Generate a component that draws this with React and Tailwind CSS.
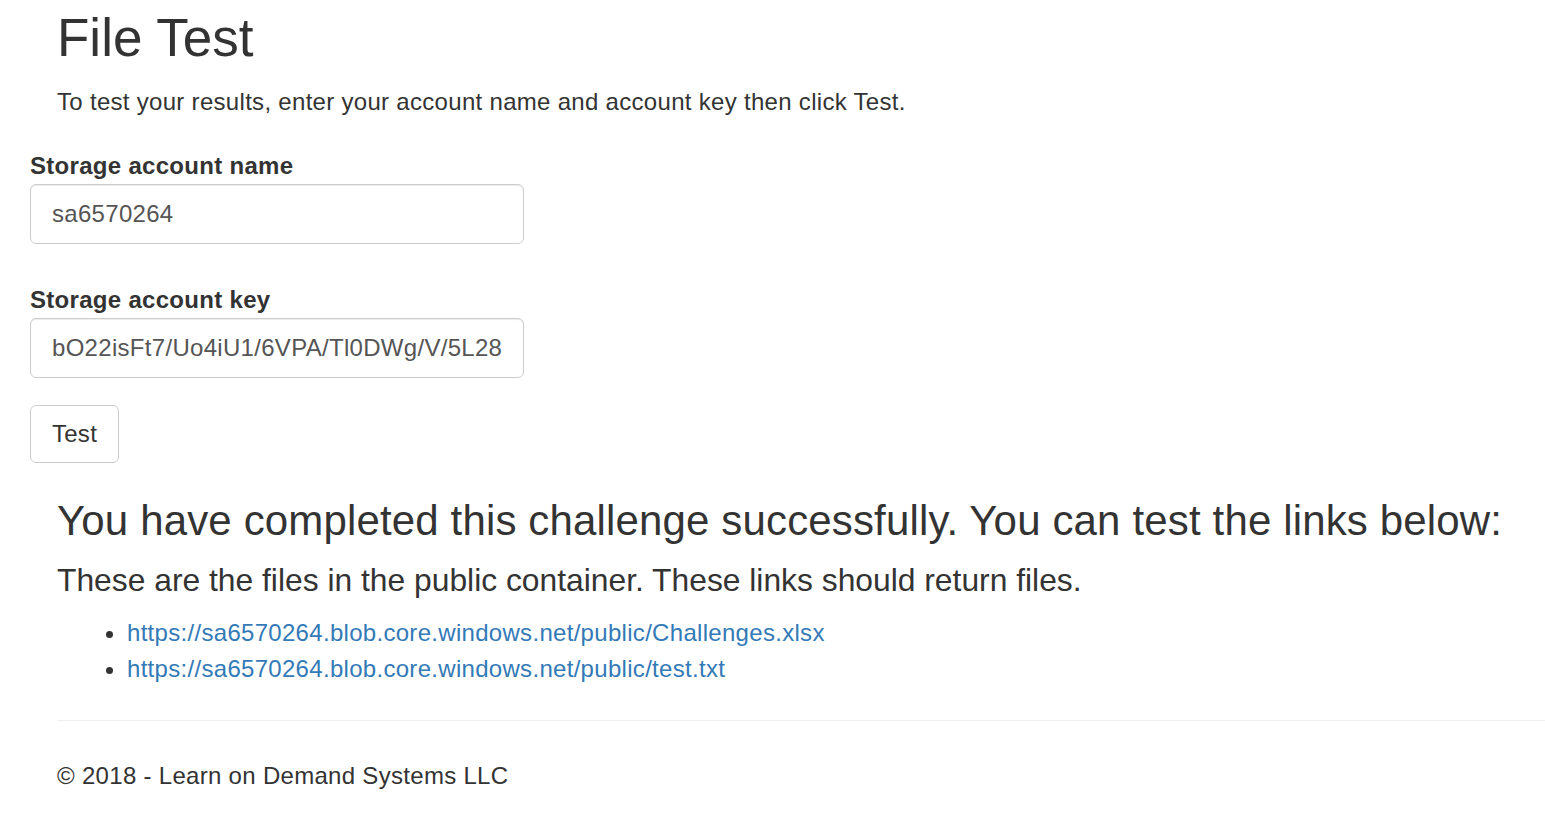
export default function App() {
  return (
    <div className="min-h-[834px] bg-white text-[#333] text-[24px] leading-[34px] tracking-[0.3px]" style={{ fontFamily: '"Liberation Sans", Arial, sans-serif' }}>
      <div className="pl-[57px] pt-[8px]">
        <h1 className="text-[53px] leading-[60px] font-normal tracking-normal">File Test</h1>
        <p className="mt-[17px]">To test your results, enter your account name and account key then click Test.</p>
      </div>
      <form className="pl-[30px] mt-[30px]" onSubmit={(e) => e.preventDefault()}>
        <div className="flex flex-col">
          <label className="font-bold leading-[34px]">Storage account name</label>
          <div className="mt-[1px] w-[494px] h-[60px] border border-[#ccc] rounded-[6px] px-[21px] flex items-center text-[#555] shadow-[inset_0_1px_1px_rgba(0,0,0,0.075)]">sa6570264</div>
        </div>
        <div className="flex flex-col mt-[39px]">
          <label className="font-bold leading-[34px]">Storage account key</label>
          <div className="mt-[1px] w-[494px] h-[60px] border border-[#ccc] rounded-[6px] pl-[21px] pr-[20px] flex items-center text-[#555] overflow-hidden whitespace-nowrap shadow-[inset_0_1px_1px_rgba(0,0,0,0.075)]">
            <span className="block overflow-hidden">bO22isFt7/Uo4iU1/6VPA/Tl0DWg/V/5L28</span>
          </div>
        </div>
        <button type="button" className="mt-[27px] w-[89px] h-[58px] border border-[#ccc] rounded-[6px] bg-white text-[#333] flex items-center justify-center">Test</button>
      </form>
      <div className="pl-[57px]">
        <h2 className="mt-[35px] text-[42px] leading-[46px] font-normal tracking-[0.15px] whitespace-nowrap">You have completed this challenge successfully. You can test the links below:</h2>
        <h3 className="mt-[19px] text-[31.8px] leading-[35px] font-normal tracking-normal">These are the files in the public container. These links should return files.</h3>
        <ul className="mt-[17px] list-disc pl-[70px] leading-[36px]">
          <li><a className="text-[#337ab7]" href="#">https://sa6570264.blob.core.windows.net/public/Challenges.xlsx</a></li>
          <li><a className="text-[#337ab7]" href="#">https://sa6570264.blob.core.windows.net/public/test.txt</a></li>
        </ul>
        <hr className="mt-[33px] border-t border-[#eee]" />
        <footer className="mt-[38px]">© 2018 - Learn on Demand Systems LLC</footer>
      </div>
    </div>
  );
}
